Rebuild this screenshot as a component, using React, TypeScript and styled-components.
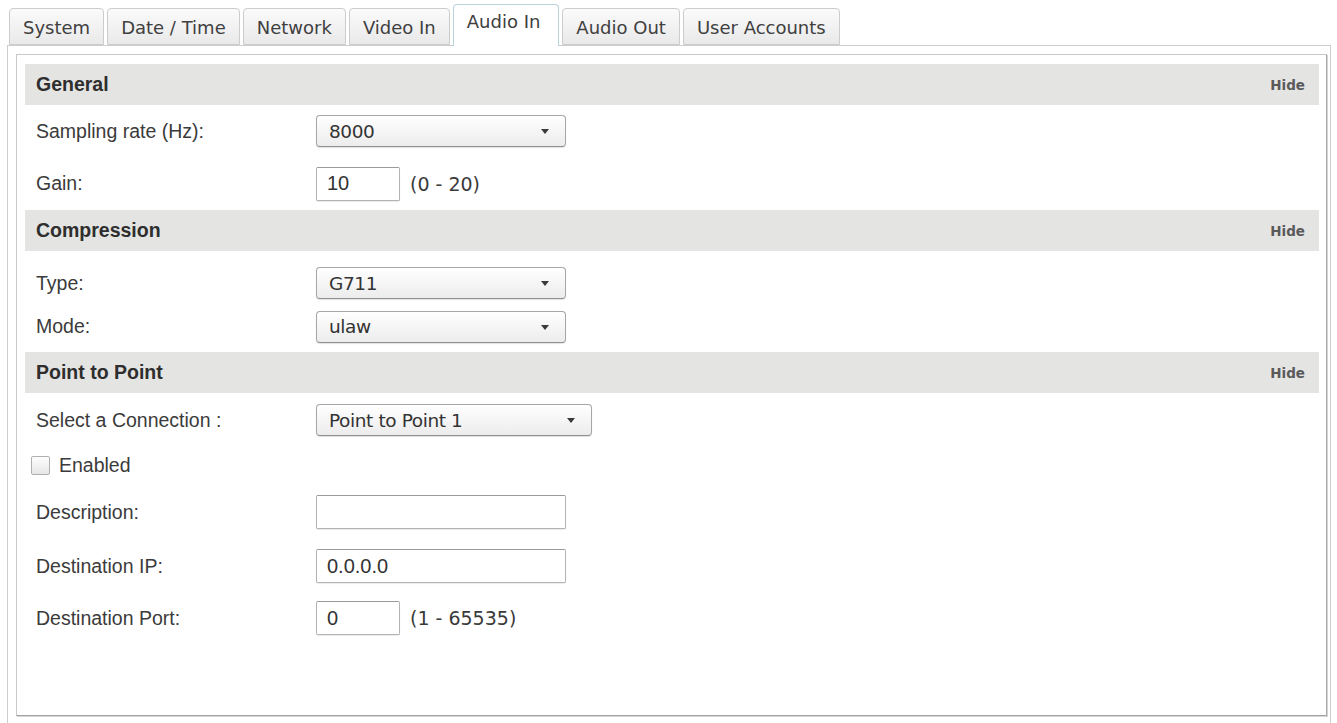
import React from 'react';
import styled, { createGlobalStyle } from 'styled-components';

const GlobalStyle = createGlobalStyle`
  html, body {
    margin: 0;
    padding: 0;
    background: #ffffff;
    overflow: hidden;
  }
  body {
    font-family: 'Liberation Sans', Arial, sans-serif;
    color: #333333;
  }
`;

const tabs = ['System', 'Date / Time', 'Network', 'Video In', 'Audio In', 'Audio Out', 'User Accounts'];
const activeTab = 'Audio In';

const Page = styled.div`
  padding: 4px 7px 0 7px;
  width: 1324px;
`;

const TabStrip = styled.div`
  display: flex;
  align-items: flex-end;
  gap: 3px;
  height: 41px;
  padding-left: 2px;
`;

const Tab = styled.div<{ $active?: boolean }>`
  position: relative;
  z-index: 2;
  display: flex;
  align-items: ${(p) => (p.$active ? 'flex-start' : 'center')};
  box-sizing: border-box;
  height: ${(p) => (p.$active ? '42px' : '37px')};
  margin-bottom: ${(p) => (p.$active ? '-1px' : '0')};
  padding: ${(p) => (p.$active ? '6px 18px 0 13px' : '2px 13px 0 13px')};
  border: 1px solid ${(p) => (p.$active ? '#b9d3dd' : '#cccccc')};
  border-bottom: ${(p) => (p.$active ? 'none' : '1px solid #cccccc')};
  border-radius: 4px 4px 0 0;
  background: ${(p) => (p.$active ? '#ffffff' : 'linear-gradient(#fbfbfb, #e9e9e9)')};
  font-family: 'DejaVu Sans', Verdana, sans-serif;
  font-size: 18px;
  color: #404040;
  white-space: nowrap;
`;

const Frame = styled.div`
  border: 1px solid #cdcdcd;
  border-bottom: none;
  padding: 8px 3px 0 8px;
  height: 700px;
`;

const Panel = styled.div`
  box-sizing: border-box;
  height: 662px;
  border: 1px solid #c9c9c9;
  border-right-color: #a9a9a9;
  border-bottom-color: #a3a3a3;
  box-shadow: 1px 1px 0 #d6d6d6;
  padding: 9px 7px 0 8px;
  background: #ffffff;
`;

const Band = styled.div`
  display: flex;
  align-items: center;
  justify-content: space-between;
  height: 41px;
  padding: 0 14px 0 11px;
  background: #e4e4e3;
`;

const BandTitle = styled.span`
  font-weight: bold;
  font-size: 19.5px;
  color: #2e2e2e;
`;

const HideLink = styled.span`
  font-family: 'DejaVu Sans', Verdana, sans-serif;
  font-weight: bold;
  font-size: 13.5px;
  color: #5a5a5a;
  cursor: pointer;
`;

const SectionBody = styled.div<{ $top?: number; $bottom?: number }>`
  display: flex;
  flex-direction: column;
  padding-top: ${(p) => p.$top ?? 0}px;
  padding-bottom: ${(p) => p.$bottom ?? 0}px;
`;

const Row = styled.div<{ $h: number }>`
  display: flex;
  align-items: center;
  height: ${(p) => p.$h}px;
  padding-left: 11px;
`;

const Label = styled.label`
  width: 280px;
  flex-shrink: 0;
  font-size: 19.5px;
  color: #3b3b3b;
`;

const SelectBox = styled.div<{ $width: number }>`
  position: relative;
  box-sizing: border-box;
  display: flex;
  align-items: center;
  width: ${(p) => p.$width}px;
  height: 32px;
  padding: 0 0 0 12px;
  border: 1px solid #a6a6a6;
  border-bottom-color: #8f8f8f;
  border-radius: 4px;
  background: linear-gradient(#ffffff, #ececec);
  box-shadow: 0 1px 1px rgba(0, 0, 0, 0.12);
  font-family: 'DejaVu Sans', Verdana, sans-serif;
  font-size: 18.5px;
  letter-spacing: -0.4px;
  color: #333333;
`;

const Caret = styled.span`
  position: absolute;
  right: 16px;
  top: 50%;
  margin-top: -2px;
  width: 0;
  height: 0;
  border-left: 4px solid transparent;
  border-right: 4px solid transparent;
  border-top: 5px solid #3a3a3a;
`;

const TextBox = styled.div<{ $width: number }>`
  box-sizing: border-box;
  display: flex;
  align-items: center;
  width: ${(p) => p.$width}px;
  height: 34px;
  padding-left: 10px;
  border: 1px solid #b3b3b3;
  border-top-color: #9a9a9a;
  border-radius: 2px;
  background: #ffffff;
  box-shadow: 0 1px 1px rgba(0, 0, 0, 0.08);
  font-size: 20px;
  color: #333333;
`;

const RangeHint = styled.span`
  margin-left: 10px;
  font-family: 'DejaVu Sans', Verdana, sans-serif;
  font-size: 19px;
  color: #3a3a3a;
`;

const CheckRow = styled.label`
  display: flex;
  align-items: center;
  gap: 9px;
  margin-left: -5px;
  font-size: 19.5px;
  color: #3b3b3b;
`;

const CheckBox = styled.span`
  box-sizing: border-box;
  width: 19px;
  height: 19px;
  border: 1px solid #b0b0b0;
  border-radius: 2px;
  background: linear-gradient(#fdfdfd, #e6e6e6);
`;

function Select({ value, width = 250 }: { value: string; width?: number }) {
  return (
    <SelectBox $width={width}>
      {value}
      <Caret />
    </SelectBox>
  );
}

function Section({ title, children }: { title: string; children?: React.ReactNode }) {
  return (
    <>
      <Band>
        <BandTitle>{title}</BandTitle>
        <HideLink>Hide</HideLink>
      </Band>
      {children}
    </>
  );
}

export default function App() {
  return (
    <>
      <GlobalStyle />
      <Page>
        <TabStrip>
          {tabs.map((t) => (
            <Tab key={t} $active={t === activeTab}>
              {t}
            </Tab>
          ))}
        </TabStrip>
        <Frame>
          <Panel>
            <Section title='General'>
              <SectionBody>
                <Row $h={52}>
                  <Label>Sampling rate (Hz):</Label>
                  <Select value='8000' />
                </Row>
                <Row $h={53}>
                  <Label>Gain:</Label>
                  <TextBox $width={84}>10</TextBox>
                  <RangeHint>(0 - 20)</RangeHint>
                </Row>
              </SectionBody>
            </Section>

            <Section title='Compression'>
              <SectionBody $top={10} $bottom={4}>
                <Row $h={44}>
                  <Label>Type:</Label>
                  <Select value='G711' />
                </Row>
                <Row $h={43}>
                  <Label>Mode:</Label>
                  <Select value='ulaw' />
                </Row>
              </SectionBody>
            </Section>

            <Section title='Point to Point'>
              <SectionBody>
                <Row $h={54}>
                  <Label>Select a Connection :</Label>
                  <Select value='Point to Point 1' width={276} />
                </Row>
                <Row $h={36}>
                  <CheckRow>
                    <CheckBox />
                    Enabled
                  </CheckRow>
                </Row>
                <Row $h={58}>
                  <Label>Description:</Label>
                  <TextBox $width={250} />
                </Row>
                <Row $h={50}>
                  <Label>Destination IP:</Label>
                  <TextBox $width={250}>0.0.0.0</TextBox>
                </Row>
                <Row $h={54}>
                  <Label>Destination Port:</Label>
                  <TextBox $width={84}>0</TextBox>
                  <RangeHint>(1 - 65535)</RangeHint>
                </Row>
              </SectionBody>
            </Section>
          </Panel>
        </Frame>
      </Page>
    </>
  );
}
